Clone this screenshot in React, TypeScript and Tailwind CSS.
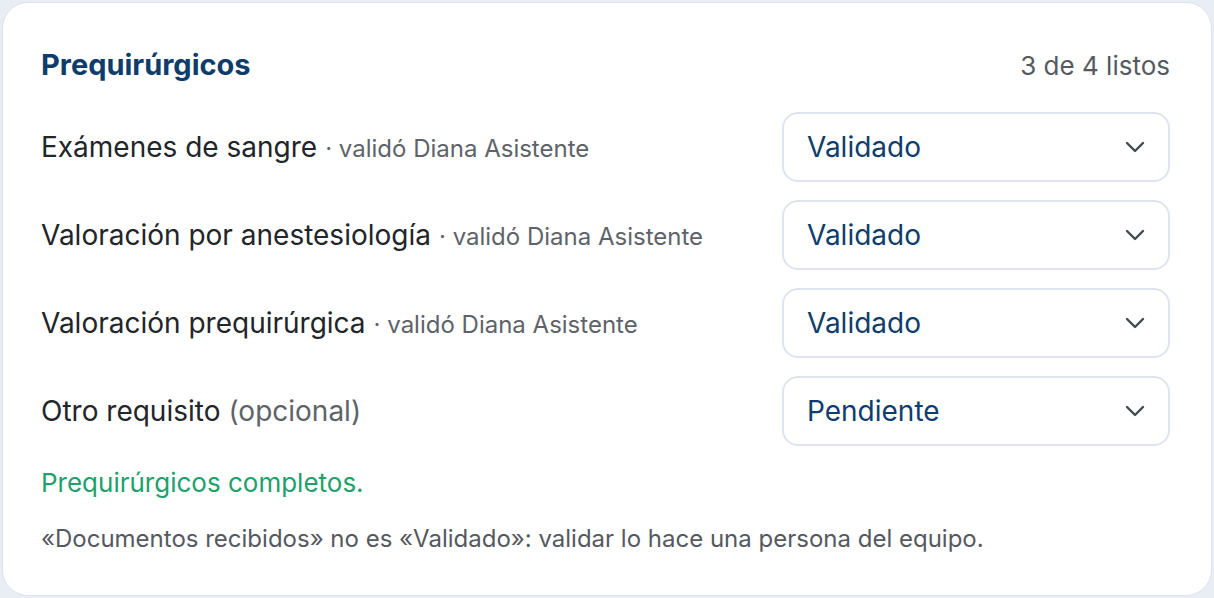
type Req = {
  name: string;
  note: string;
  status: string;
};

const reqs: Req[] = [
  { name: "Exámenes de sangre", note: "· validó Diana Asistente", status: "Validado" },
  { name: "Valoración por anestesiología", note: "· validó Diana Asistente", status: "Validado" },
  { name: "Valoración prequirúrgica", note: "· validó Diana Asistente", status: "Validado" },
  { name: "Otro requisito", note: "(opcional)", status: "Pendiente" },
];

function Chevron() {
  return (
    <svg width="20" height="12" viewBox="0 0 20 12" fill="none" className="text-[#45494f]">
      <polyline
        points="2,2 10,10 18,2"
        stroke="currentColor"
        strokeWidth="2.4"
        strokeLinecap="round"
        strokeLinejoin="round"
      />
    </svg>
  );
}

export default function App(): JSX.Element {
  return (
    <div className="min-h-[598px] bg-[#e9eef5] p-[2px] font-['Inter','Liberation_Sans',sans-serif]">
      <div className="rounded-[26px] border border-[#dde3ec] bg-white pl-[38px] pr-[41px] pt-[44px] pb-[42px]">
        <div className="flex items-center justify-between h-[36px]">
          <h2 className="text-[29px] font-bold text-[#0f3d6b]">Prequirúrgicos</h2>
          <span className="text-[26px] text-[#555a61]">3 de 4 listos</span>
        </div>

        <div className="mt-[29px] flex flex-col gap-[18px]">
          {reqs.map((r) => (
            <div key={r.name} className="flex items-center justify-between">
              <div className="flex items-baseline gap-[8px]">
                <span className="text-[28px] text-[#222529]">{r.name}</span>
                <span
                  className={
                    r.note.startsWith("(")
                      ? "text-[28px] text-[#5e6369]"
                      : "text-[24px] text-[#5e6369]"
                  }
                >
                  {r.note}
                </span>
              </div>
              <button
                type="button"
                className="flex h-[70px] w-[388px] items-center justify-between rounded-[16px] border-2 border-[#dfe5ee] bg-white pl-[23px] pr-[23px]"
              >
                <span className="text-[28px] text-[#0f3d6b]">{r.status}</span>
                <Chevron />
              </button>
            </div>
          ))}
        </div>

        <p className="mt-[21px] text-[26px] leading-[32px] text-[#22a06c]">
          Prequirúrgicos completos.
        </p>
        <p className="mt-[26px] text-[24px] leading-[28px] text-[#55595f]">
          «Documentos recibidos» no es «Validado»: validar lo hace una persona del equipo.
        </p>
      </div>
    </div>
  );
}
